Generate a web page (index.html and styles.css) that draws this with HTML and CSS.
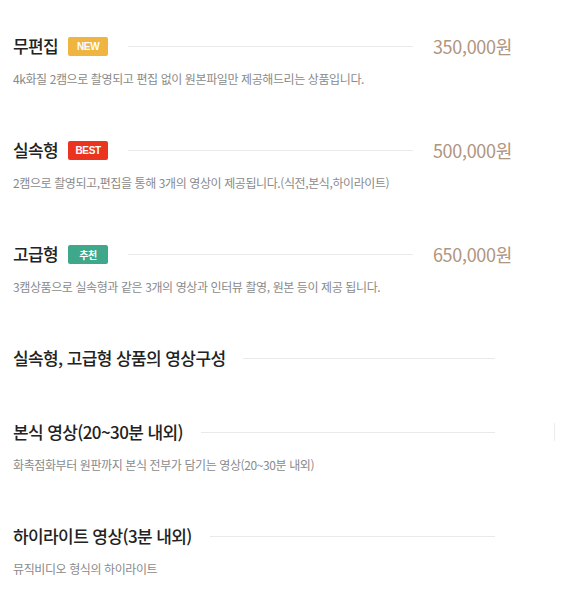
FILE: index.html
```html
<!DOCTYPE html>
<html lang="ko">
<head>
<meta charset="utf-8">
<link rel="stylesheet" href="styles.css">
</head>
<body>
<div class="page">
  <div class="item">
    <div class="head">
      <h3 class="title">무편집</h3>
      <span class="badge badge-new">NEW</span>
      <span class="rule"></span>
      <span class="price">350,000원</span>
    </div>
    <p class="desc">4k화질 2캠으로 촬영되고 편집 없이 원본파일만 제공해드리는 상품입니다.</p>
  </div>
  <div class="item">
    <div class="head">
      <h3 class="title">실속형</h3>
      <span class="badge badge-best">BEST</span>
      <span class="rule"></span>
      <span class="price">500,000원</span>
    </div>
    <p class="desc">2캠으로 촬영되고,편집을 통해 3개의 영상이 제공됩니다.(식전,본식,하이라이트)</p>
  </div>
  <div class="item">
    <div class="head">
      <h3 class="title">고급형</h3>
      <span class="badge badge-rec">추천</span>
      <span class="rule"></span>
      <span class="price">650,000원</span>
    </div>
    <p class="desc">3캠상품으로 실속형과 같은 3개의 영상과 인터뷰 촬영, 원본 등이 제공 됩니다.</p>
  </div>
  <div class="item">
    <div class="head">
      <h3 class="title">실속형, 고급형 상품의 영상구성</h3>
      <span class="rule rule-wide"></span>
    </div>
  </div>
  <div class="item">
    <div class="head">
      <h3 class="title">본식 영상(20~30분 내외)</h3>
      <span class="rule rule-wide"></span>
    </div>
    <p class="desc">화촉점화부터 원판까지 본식 전부가 담기는 영상(20~30분 내외)</p>
  </div>
  <div class="item">
    <div class="head">
      <h3 class="title">하이라이트 영상(3분 내외)</h3>
      <span class="rule rule-wide"></span>
    </div>
    <p class="desc">뮤직비디오 형식의 하이라이트</p>
  </div>
  <span class="mark"></span>
</div>
</body>
</html>
```
FILE: styles.css
```css
* { box-sizing: border-box; }
html, body {
  margin: 0;
  padding: 0;
  background: #ffffff;
}
body {
  font-family: "Noto Sans CJK KR", "Noto Sans", sans-serif;
  color: #222;
}
.page {
  position: relative;
  width: 512px;
  padding: 35px 0 0 13px;
  display: flex;
  flex-direction: column;
  gap: 52px;
}
.head {
  display: flex;
  align-items: center;
  height: 22px;
}
.title {
  margin: 0;
  font-size: 17px;
  font-weight: 500;
  letter-spacing: -0.6px;
  line-height: 22px;
  color: #222;
  white-space: nowrap;
}
.badge {
  margin-left: 10px;
  width: 40px;
  height: 19px;
  border-radius: 2px;
  color: #fff;
  font-family: "Liberation Sans", "Noto Sans CJK KR", sans-serif;
  font-size: 10px;
  font-weight: 700;
  letter-spacing: -0.3px;
  display: flex;
  align-items: center;
  justify-content: center;
}
.badge-new { background: #f0b440; }
.badge-best { background: #ea3420; }
.badge-rec { background: #3fa88a; font-family: "Noto Sans CJK KR", sans-serif; }
.rule {
  flex: 1;
  height: 1px;
  background: #e9e9e9;
  margin: 0 20px;
}
.rule-wide {
  margin: 0 17px 0 18px;
}
.price {
  font-size: 18px;
  color: #b0957f;
  letter-spacing: -0.3px;
  line-height: 22px;
  white-space: nowrap;
}
.desc {
  margin: 14px 0 0;
  font-size: 12px;
  line-height: 16px;
  letter-spacing: -0.4px;
  color: #8a8a8a;
  white-space: nowrap;
}
.mark {
  position: absolute;
  left: 554px;
  top: 423px;
  width: 1px;
  height: 18px;
  background: #ececec;
}
```
